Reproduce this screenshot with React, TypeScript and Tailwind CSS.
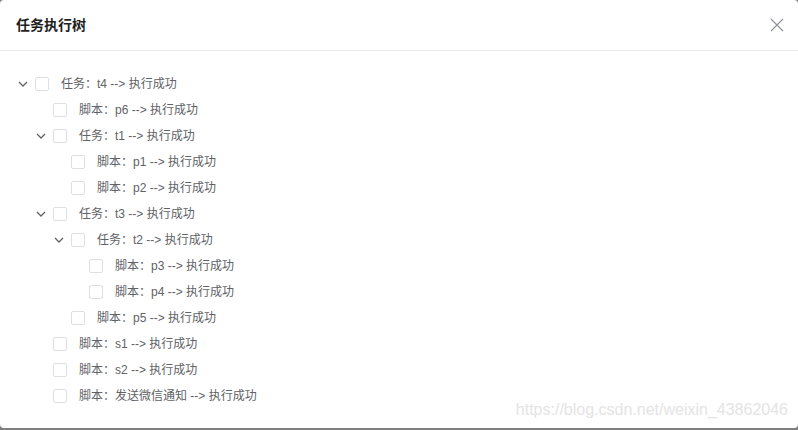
import React from 'react';

type TreeNode = {
  label: string;
  children?: TreeNode[];
};

const tree: TreeNode[] = [
  {
    label: '任务：t4 --> 执行成功',
    children: [
      { label: '脚本：p6 --> 执行成功' },
      {
        label: '任务：t1 --> 执行成功',
        children: [{ label: '脚本：p1 --> 执行成功' }, { label: '脚本：p2 --> 执行成功' }],
      },
      {
        label: '任务：t3 --> 执行成功',
        children: [
          {
            label: '任务：t2 --> 执行成功',
            children: [{ label: '脚本：p3 --> 执行成功' }, { label: '脚本：p4 --> 执行成功' }],
          },
          { label: '脚本：p5 --> 执行成功' },
        ],
      },
      { label: '脚本：s1 --> 执行成功' },
      { label: '脚本：s2 --> 执行成功' },
      { label: '脚本：发送微信通知 --> 执行成功' },
    ],
  },
];

// fixed indent per depth (18px steps)
const indent = ['pl-[14px]', 'pl-[32px]', 'pl-[50px]', 'pl-[68px]'];

const Chevron = () => (
  <svg width="10" height="6" viewBox="0 0 10 6" fill="none" aria-hidden="true">
    <path d="M1 1l4 4 4-4" stroke="#606266" strokeWidth="1.3" />
  </svg>
);

const TreeRow: React.FC<{ node: TreeNode; depth: number }> = ({ node, depth }) => (
  <>
    <div className={`flex h-[26px] items-center ${indent[depth]}`}>
      <span className="flex w-[18px] justify-center">{node.children && <Chevron />}</span>
      <span className="ml-[3px] h-[14px] w-[14px] rounded-[2px] border border-[#dcdfe6] bg-white" />
      <span className="ml-[12px] text-[12px] text-[#606266]">{node.label}</span>
    </div>
    {node.children?.map((child) => (
      <TreeRow key={child.label} node={child} depth={depth + 1} />
    ))}
  </>
);

export default function App() {
  return (
    <div
      className="h-[430px] w-[798px] bg-[#7f7f7f]"
      style={{ fontFamily: '"Liberation Sans", "Noto Sans CJK SC", sans-serif' }}
    >
      <div className="relative h-[428px] w-[798px] overflow-hidden rounded-[4px] bg-white">
        <div className="flex h-[51px] items-center justify-between border-b border-[#e8e8e8] pl-[16px] pr-[14px]">
          <span className="text-[14px] font-bold text-[#1f1f1f]">任务执行树</span>
          <svg width="14" height="14" viewBox="0 0 14 14" aria-hidden="true">
            <path d="M1 1l12 12M13 1L1 13" stroke="#909399" strokeWidth="1.2" />
          </svg>
        </div>
        <div className="pt-[20px]">
          {tree.map((node) => (
            <TreeRow key={node.label} node={node} depth={0} />
          ))}
        </div>
        <span className="absolute bottom-[6px] right-[10px] text-[16px] text-[#e4e4e4]">
          https://blog.csdn.net/weixin_43862046
        </span>
      </div>
    </div>
  );
}
